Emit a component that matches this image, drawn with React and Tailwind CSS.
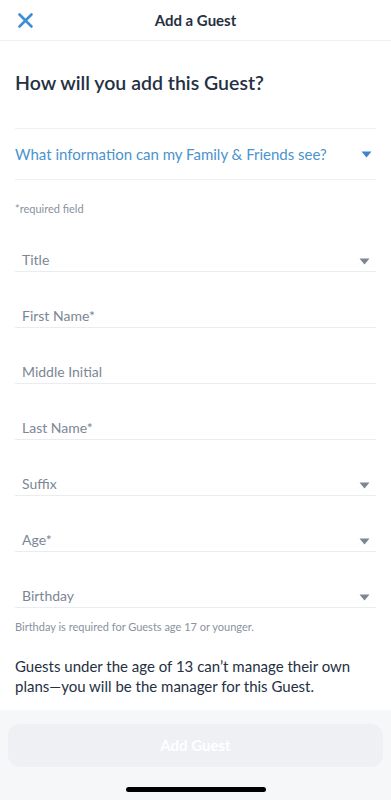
import React from 'react';

const fields = [
    { label: 'Title', select: true },
    { label: 'First Name*' },
    { label: 'Middle Initial' },
    { label: 'Last Name*' },
    { label: 'Suffix', select: true },
    { label: 'Age*', select: true },
    { label: 'Birthday', select: true },
];

const Caret = ({ className }) => (
    <svg width="11" height="7" viewBox="0 0 11 7" className={className}>
        <path d="M0.5 0.5 H10.5 L5.5 6.5 Z" fill="currentColor" />
    </svg>
);

const Field = ({ label, select }) => (
    <div className="mt-[24px] flex h-[32px] items-end border-b border-[#e9ecf0] pb-[1px] pl-[7px] pr-[6px]">
        <span className="flex-1 text-[14px] leading-[20px] text-[#7c8695]">{label}</span>
        {select && <Caret className="mb-[5px] text-[#7d8592]" />}
    </div>
);

export default function App() {
    return (
        <div className="flex min-h-[800px] w-full flex-col bg-white font-['Lato',sans-serif] text-[#253042]">
            <header className="relative flex h-[41px] items-center justify-center border-b border-[#eef0f3]">
                <button className="absolute left-[17px] top-[12px] text-[#3c8fd4]">
                    <svg width="17" height="17" viewBox="0 0 17 17">
                        <path d="M2.5 2.5 L14.5 14.5 M14.5 2.5 L2.5 14.5" stroke="currentColor" strokeWidth="2.6" strokeLinecap="round" />
                    </svg>
                </button>
                <h1 className="text-[15px] font-bold">Add a Guest</h1>
            </header>

            <main className="flex-1 px-[15px]">
                <h2 className="mt-[29px] text-[19.5px] font-semibold leading-[26px]">How will you add this Guest?</h2>

                <div className="mt-[32px] flex h-[52px] items-center border-y border-[#eef0f3] pr-[4px]">
                    <span className="flex-1 text-[15px] text-[#4b93cd]">What information can my Family &amp; Friends see?</span>
                    <Caret className="text-[#3e86cc]" />
                </div>

                <p className="mt-[21px] text-[11px] text-[#8a929e]">*required field</p>

                <div className="mt-[-2px]">
                    {fields.map(f => (
                        <Field key={f.label} {...f} />
                    ))}
                </div>

                <p className="mt-[11px] text-[11px] text-[#8a929e]">Birthday is required for Guests age 17 or younger.</p>

                <p className="mt-[21px] text-[15px] leading-[20px] text-[#253042]">
                    Guests under the age of 13 can’t manage their own plans—you will be the manager for this Guest.
                </p>
            </main>

            <footer className="mt-[12px] flex flex-col items-center bg-[#f6f7f9] px-[8px] pt-[14px]">
                <button className="h-[43px] w-full rounded-[12px] bg-[#eef0f4] text-[15px] font-bold text-white">Add Guest</button>
                <div className="mb-[8px] mt-[20px] h-[5px] w-[140px] rounded-full bg-black" />
            </footer>
        </div>
    );
}
